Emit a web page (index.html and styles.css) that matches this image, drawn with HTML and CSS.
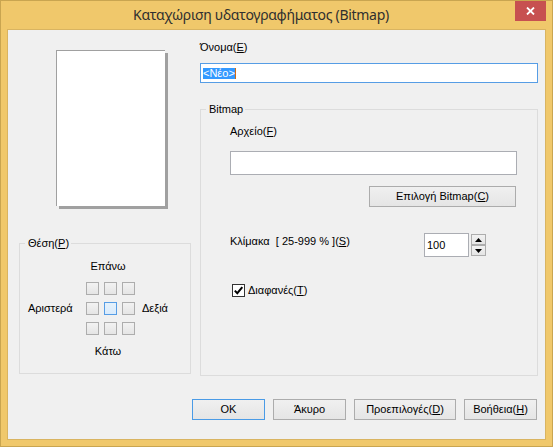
FILE: index.html
```html
<!DOCTYPE html>
<html lang="el">
<head>
<meta charset="utf-8">
<title>Καταχώριση υδατογραφήματος (Bitmap)</title>
<link rel="stylesheet" href="styles.css">
</head>
<body>
<div class="window">
  <div class="titlebar">
    <span class="title">Καταχώριση υδατογραφήματος (Bitmap)</span>
    <span class="close"><svg width="9" height="8" viewBox="0 0 9 8"><path d="M1 0.5 L8 7.5 M8 0.5 L1 7.5" stroke="#fff" stroke-width="1.8" fill="none"/></svg></span>
  </div>
  <div class="client">
    <div class="main">
      <div class="left">
        <div class="preview"></div>
        <fieldset class="group pos">
          <legend>Θέση(<u>P</u>)</legend>
          <div class="pos-top">Επάνω</div>
          <div class="pos-mid">
            <span class="pos-l">Αριστερά</span>
            <div class="cells">
              <span class="cell"></span><span class="cell"></span><span class="cell"></span>
              <span class="cell"></span><span class="cell on"></span><span class="cell"></span>
              <span class="cell"></span><span class="cell"></span><span class="cell"></span>
            </div>
            <span class="pos-r">Δεξιά</span>
          </div>
          <div class="pos-bot">Κάτω</div>
        </fieldset>
      </div>
      <div class="right">
        <div class="label">Όνομα(<u>E</u>)</div>
        <div class="textbox name focus"><span class="sel">&lt;Νέο&gt;</span></div>
        <fieldset class="group bitmap">
          <legend>Bitmap</legend>
          <div class="bm-body">
            <div class="label file-label">Αρχείο(<u>F</u>)</div>
            <div class="textbox file"></div>
            <div class="btn choose">Επιλογή Bitmap(<u>C</u>)</div>
            <div class="scale-row">
              <span class="scale-label">Κλίμακα&nbsp; [ 25-999 % ](<u>S</u>)</span>
              <div class="textbox spin-input">100</div>
              <div class="spin">
                <span class="spin-btn"><svg width="7" height="4" viewBox="0 0 7 4"><polygon points="0,4 7,4 3.5,0" fill="#000"/></svg></span>
                <span class="spin-btn"><svg width="7" height="4" viewBox="0 0 7 4"><polygon points="0,0 7,0 3.5,4" fill="#000"/></svg></span>
              </div>
            </div>
            <div class="check-row">
              <span class="checkbox"><svg width="11" height="11" viewBox="0 0 11 11"><path d="M1.8 5.6 L4.3 8.2 L9.3 2.2" stroke="#000" stroke-width="2" fill="none"/></svg></span>
              <span>Διαφανές(<u>T</u>)</span>
            </div>
          </div>
        </fieldset>
      </div>
    </div>
    <div class="buttons">
      <div class="btn default w73">OK</div>
      <div class="btn w73">Άκυρο</div>
      <div class="btn w102">Προεπιλογές(<u>D</u>)</div>
      <div class="btn w73">Βοήθεια(<u>H</u>)</div>
    </div>
  </div>
</div>
</body>
</html>
```
FILE: styles.css
```css
html, body { margin: 0; padding: 0; }
body { background: #f0c86b; }

.window {
  width: 553px;
  height: 447px;
  box-sizing: border-box;
  border: 1px solid #c9a550;
  background: #f0c86b;
  padding: 0 6px 6px;
  display: flex;
  flex-direction: column;
  font-family: "Liberation Sans", Arial, sans-serif;
  font-size: 11px;
  line-height: 13px;
  color: #000;
}

.titlebar {
  flex: none;
  height: 28px;
  display: grid;
  grid-template-columns: 1fr 31px;
}
.title {
  font-family: "Noto Sans", "Open Sans", sans-serif;
  font-size: 14px;
  letter-spacing: -0.3px;
  line-height: 27px;
  text-align: center;
  color: #2f2f2f;
  white-space: nowrap;
}
.close {
  height: 20px;
  background: #c75050;
  display: flex;
  align-items: center;
  justify-content: center;
}

.client {
  flex: 1;
  border: 1px solid #d9b461;
  background: #f0f0f0;
  display: flex;
  flex-direction: column;
}

.main {
  flex: 1;
  display: flex;
  padding-left: 11px;
  gap: 9px;
}
.left {
  width: 172px;
  display: flex;
  flex-direction: column;
  padding-top: 20px;
}
.right {
  width: 338px;
  display: flex;
  flex-direction: column;
  padding-top: 11px;
}

.preview {
  width: 109px;
  height: 156px;
  box-sizing: border-box;
  margin-left: 37px;
  background: #fff;
  border-top: 1px solid #a0a0a0;
  border-left: 1px solid #a0a0a0;
  box-shadow: 3px 3px 0 #a0a0a0;
}

.group {
  margin: 0;
  padding: 0;
  min-width: 0;
  border: 1px solid #dcdcdc;
}
.group legend {
  margin-left: 5px;
  padding: 0 2px 0 3px;
  line-height: 13px;
}
.group.pos {
  margin-top: 31px;
  margin-bottom: 2px;
  flex: 1;
}
.group.bitmap {
  margin-top: 20px;
  flex: 1;
}

.pos-top, .pos-bot {
  width: 60px;
  margin-left: 58px;
  text-align: center;
}
.pos-top { margin-top: 10px; }
.pos-bot { margin-top: 10px; }
.pos-mid {
  margin-top: 9px;
  display: flex;
  align-items: center;
  padding-left: 8px;
}
.pos-l { width: 58px; }
.pos-r { margin-left: 7px; }
.cells {
  display: grid;
  grid-template-columns: repeat(3, 13px);
  grid-auto-rows: 13px;
  column-gap: 5px;
  row-gap: 7px;
}
.cell {
  box-sizing: border-box;
  border: 1px solid #adadad;
  background: linear-gradient(#f2f2f2, #e5e5e5);
}
.cell.on {
  border-color: #569de5;
  background: linear-gradient(#e5f1fb, #d9ebfc);
}

.textbox {
  box-sizing: border-box;
  background: #fff;
  border: 1px solid #abadb3;
  display: flex;
  align-items: center;
  padding-left: 2px;
}
.textbox.focus { border-color: #569de5; }
.name {
  margin-top: 9px;
  height: 20px;
}
.sel {
  display: inline-block;
  height: 11px;
  line-height: 11px;
  background: #3399ff;
  color: #fff;
  border-right: 1px solid #d06a10;
}

.bm-body {
  padding-left: 29px;
  display: flex;
  flex-direction: column;
  align-items: flex-start;
}
.file-label { margin-top: 9px; }
.file {
  margin-top: 13px;
  width: 287px;
  height: 24px;
}

.btn {
  box-sizing: border-box;
  height: 21px;
  border: 1px solid #acacac;
  background: linear-gradient(#f0f0f0, #e5e5e5);
  display: flex;
  align-items: center;
  justify-content: center;
  white-space: nowrap;
}
.btn.default { border-color: #4a9be6; }
.choose {
  margin-top: 11px;
  margin-left: 139px;
  width: 147px;
}

.scale-row {
  margin-top: 26px;
  display: flex;
  align-items: flex-start;
}
.scale-label {
  width: 194px;
  margin-top: 2px;
  white-space: nowrap;
}
.spin-input {
  width: 45px;
  height: 24px;
}
.spin {
  margin-left: 2px;
  margin-top: 1px;
  display: flex;
  flex-direction: column;
}
.spin-btn {
  box-sizing: border-box;
  width: 15px;
  height: 11px;
  border: 1px solid #adadad;
  background: linear-gradient(#f2f2f2, #e5e5e5);
  display: flex;
  align-items: center;
  justify-content: center;
}

.check-row {
  margin-top: 27px;
  padding-left: 2px;
  display: flex;
  align-items: center;
  gap: 3px;
}
.checkbox {
  box-sizing: border-box;
  width: 13px;
  height: 13px;
  border: 1px solid #333;
  background: #fff;
  display: flex;
  align-items: center;
  justify-content: center;
}

.buttons {
  flex: none;
  display: flex;
  justify-content: flex-end;
  gap: 8px;
  margin-top: 23px;
  padding: 0 8px 19px 0;
}
.w73 { width: 73px; }
.w102 { width: 102px; }
```
